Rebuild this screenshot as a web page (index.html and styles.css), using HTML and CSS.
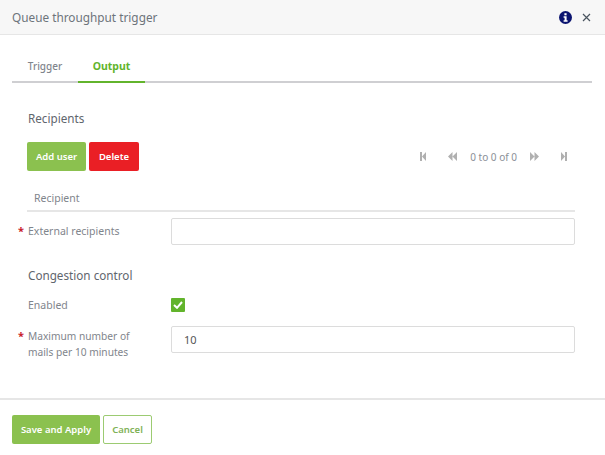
FILE: index.html
```html
<!DOCTYPE html>
<html lang="en">
<head>
    <meta charset="UTF-8">
    <meta name="viewport" content="width=device-width, initial-scale=1.0">
    <title>Queue throughput trigger</title>
    <link rel="stylesheet" href="styles.css">
</head>
<body>
    <div class="dialog">
        <div class="dialog-header">
            <h2 class="dialog-title">Queue throughput trigger</h2>
            <div class="header-icons">
                <svg class="info-icon" width="13" height="13" viewBox="0 0 13 13">
                    <circle cx="6.5" cy="6.5" r="6.5" fill="#0b1470"/>
                    <rect x="5.4" y="2.2" width="2.2" height="2.1" fill="#fff"/>
                    <path d="M4.6 5.3h3v4h1v1.4H4.6V9.3h1V6.7h-1z" fill="#fff"/>
                </svg>
                <svg class="close-icon" width="9" height="9" viewBox="0 0 9 9">
                    <path d="M1 1l7 7M8 1L1 8" stroke="#4a5560" stroke-width="1.2" fill="none"/>
                </svg>
            </div>
        </div>

        <div class="tabs">
            <a class="tab">Trigger</a>
            <a class="tab active">Output</a>
        </div>

        <div class="content">
            <h3 class="section-title">Recipients</h3>
            <div class="toolbar">
                <button class="btn btn-green">Add user</button>
                <button class="btn btn-red">Delete</button>
                <div class="pager">
                    <svg class="pager-first" width="6" height="9" viewBox="0 0 6 9"><path d="M0 0h2v9H0zM6 0v9L2 4.500z" fill="#b0b0b0"/></svg>
                    <svg class="pager-prev" width="9" height="9" viewBox="0 0 9 9"><path d="M4.500 0v9L0 4.500zM9 0v9L4.500 4.500z" fill="#b0b0b0"/></svg>
                    <span class="pager-text">0 to 0 of 0</span>
                    <svg class="pager-next" width="9" height="9" viewBox="0 0 9 9"><path d="M0 0v9l4.500-4.500zM4.500 0v9L9 4.500z" fill="#b0b0b0"/></svg>
                    <svg class="pager-last" width="6" height="9" viewBox="0 0 6 9"><path d="M0 0v9l4-4.500zM4 0h2v9H4z" fill="#b0b0b0"/></svg>
                </div>
            </div>
            <div class="table-head">Recipient</div>

            <div class="form-row">
                <label class="form-label required label-single">External recipients</label>
                <input class="form-input" type="text">
            </div>

            <h3 class="section-title congestion">Congestion control</h3>

            <div class="form-row check-row">
                <label class="form-label">Enabled</label>
                <span class="checkbox">
                    <svg width="10" height="8" viewBox="0 0 10 8"><path d="M1 4l3 2.800L9 1" stroke="#fff" stroke-width="2" fill="none"/></svg>
                </span>
            </div>

            <div class="form-row form-row-top">
                <label class="form-label required label-low">Maximum number of<br>mails per 10 minutes</label>
                <input class="form-input" type="text" value="10">
            </div>
        </div>

        <div class="dialog-footer">
            <button class="btn btn-green btn-save">Save and Apply</button>
            <button class="btn btn-outline">Cancel</button>
        </div>
    </div>
</body>
</html>
```

FILE: styles.css
```css
:root {
    --green: #8bc14f;
    --active: #62b42c;
    --text: #7f858c;
    --line: #e6e6e6;
}

* {
    box-sizing: border-box;
}

body {
    margin: 0;
    background: #fff;
    font-family: 'Noto Sans', 'Open Sans', sans-serif;
    font-size: 10.5px;
    color: var(--text);
}

.dialog {
    width: 605px;
    height: 455px;
    display: flex;
    flex-direction: column;
}

.dialog-header {
    height: 35px;
    padding: 0 14px 0 12px;
    display: flex;
    justify-content: space-between;
    align-items: center;
    background: #f7f7f7;
    border-bottom: 1px solid var(--line);
}

.dialog-title {
    margin: 0;
    font-size: 11.8px;
    font-weight: 400;
    color: #6d747b;
}

.header-icons {
    display: flex;
    align-items: center;
    gap: 10px;
}

.tabs {
    margin: 21px 13px 0 12px;
    height: 27px;
    display: flex;
    border-bottom: 2px solid #cfcfd2;
}

.tab {
    width: 66px;
    padding-top: 3px;
    text-align: center;
    height: 27px;
    font-size: 10px;
    font-weight: 500;
}

.tab.active {
    width: 67px;
    color: var(--active);
    font-size: 10.5px;
    font-weight: 700;
    border-bottom: 2px solid var(--active);
}

.content {
    flex: 1;
    padding: 0 30px 0 27px;
}

.section-title {
    margin: 27px 0 0 1px;
    font-size: 11.7px;
    line-height: 17px;
    font-weight: 400;
    color: #5f666d;
}

.section-title.congestion {
    margin-top: 22px;
}

.toolbar {
    margin-top: 15px;
    display: flex;
    align-items: center;
    gap: 3px;
}

.btn {
    height: 29px;
    padding: 0;
    border: none;
    border-radius: 2px;
    font-family: inherit;
    font-size: 9.5px;
    font-weight: 600;
    color: #fff;
}

.btn-green {
    width: 59px;
    background: var(--green);
}

.btn-red {
    width: 50px;
    background: #ea1f25;
}

.btn-save {
    width: 88px;
}

.btn-outline {
    width: 49px;
    background: #fff;
    color: #7fb257;
    border: 1px solid #9ccb72;
}

.pager {
    margin-left: auto;
    margin-right: 8px;
    display: flex;
    align-items: center;
    color: #8b9097;
    font-size: 10px;
}

.pager-first {
    margin-right: 22px;
}

.pager-prev {
    margin-right: 13px;
}

.pager-text {
    margin-right: 13px;
}

.pager-next {
    margin-right: 22px;
}

.table-head {
    margin-top: 20px;
    height: 21px;
    padding-left: 7px;
    border-bottom: 2px solid var(--line);
}

.form-row {
    margin-top: 6px;
    display: flex;
    align-items: center;
}

.form-row-top {
    align-items: flex-start;
}

.form-label {
    position: relative;
    width: 144px;
    padding-left: 1px;
    line-height: 16px;
}

.label-single {
    margin-bottom: 2px;
}

.label-low {
    margin-top: 2px;
    font-size: 10.2px;
}

.required::before {
    content: "*";
    position: absolute;
    left: -9px;
    top: 0;
    color: #c8202a;
    font-size: 11px;
    font-weight: 700;
}

.form-input {
    width: 404px;
    height: 27px;
    padding: 0 12px;
    border: 1px solid #dcdcdc;
    border-radius: 2px;
    font-family: inherit;
    font-size: 11px;
    color: #555;
}

.check-row {
    margin-top: 14px;
    height: 14px;
    margin-bottom: 14px;
}

.checkbox {
    width: 14px;
    height: 14px;
    display: flex;
    align-items: center;
    justify-content: center;
    background: var(--active);
    border-radius: 1px;
}

.dialog-footer {
    height: 57px;
    padding: 15px 12px 0;
    display: flex;
    gap: 3px;
    border-top: 2px solid var(--line);
}
```
